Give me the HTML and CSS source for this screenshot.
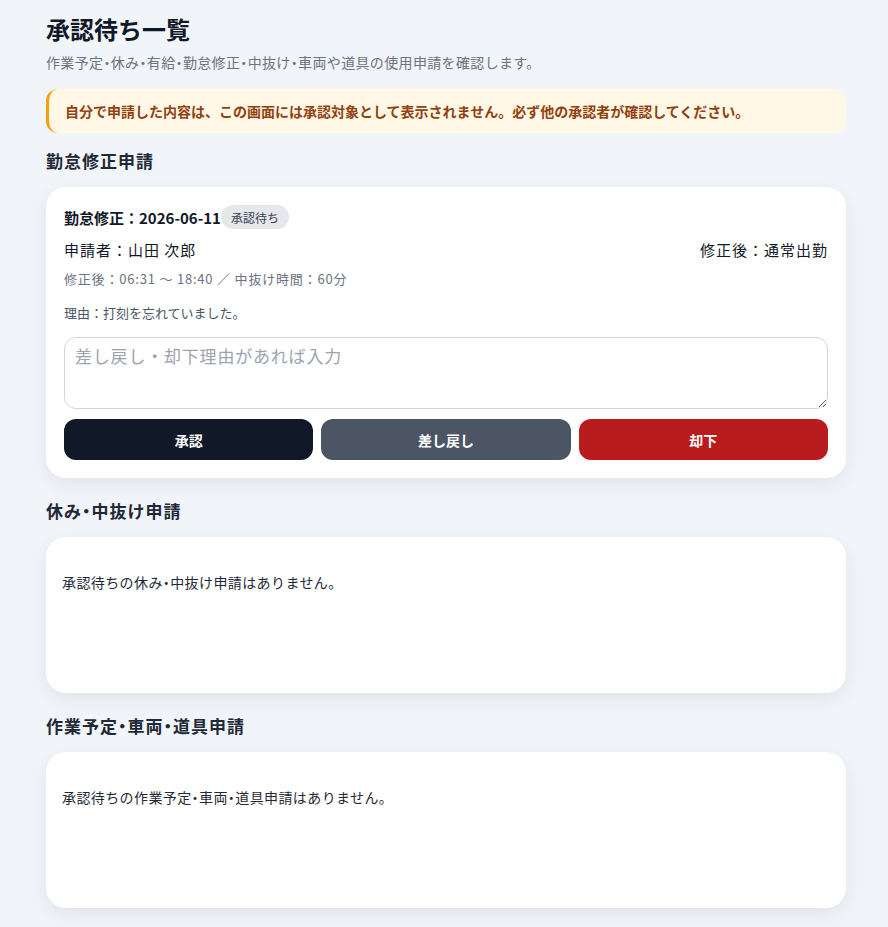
FILE: index.html
```html
<!DOCTYPE html>
<html lang="ja">
<head>
<meta charset="utf-8">
<title>承認待ち一覧</title>
<link rel="stylesheet" href="styles.css">
</head>
<body>
<main class="page">
  <h1 class="title">承認待ち一覧</h1>
  <p class="subtitle">作業予定<span class="dot">・</span>休み<span class="dot">・</span>有給<span class="dot">・</span>勤怠修正<span class="dot">・</span>中抜け<span class="dot">・</span>車両や道具の使用申請を確認します。</p>
  <div class="notice">自分で申請した内容は、この画面には承認対象として表示されません。必ず他の承認者が確認してください。</div>

  <h2 class="section-title">勤怠修正申請</h2>
  <section class="card">
    <div class="card-head">
      <span class="card-title">勤怠修正：2026-06-11</span>
      <span class="badge">承認待ち</span>
    </div>
    <div class="row">
      <span>申請者：山田 次郎</span>
      <span>修正後：通常出勤</span>
    </div>
    <p class="meta">修正後：06:31 〜 18:40 ／ 中抜け時間：60分</p>
    <p class="reason">理由：打刻を忘れていました。</p>
    <textarea class="comment" placeholder="差し戻し・却下理由があれば入力"></textarea>
    <div class="actions">
      <button class="btn btn-approve">承認</button>
      <button class="btn btn-return">差し戻し</button>
      <button class="btn btn-reject">却下</button>
    </div>
  </section>

  <h2 class="section-title">休み<span class="dot">・</span>中抜け申請</h2>
  <section class="card card-empty">
    <p class="empty">承認待ちの休み<span class="dot">・</span>中抜け申請はありません。</p>
  </section>

  <h2 class="section-title">作業予定<span class="dot">・</span>車両<span class="dot">・</span>道具申請</h2>
  <section class="card card-empty">
    <p class="empty">承認待ちの作業予定<span class="dot">・</span>車両<span class="dot">・</span>道具申請はありません。</p>
  </section>
</main>
</body>
</html>
```

FILE: styles.css
```css
* { box-sizing: border-box; }
html, body {
  margin: 0;
  padding: 0;
  background: #f1f4f8;
}
body {
  font-family: "Noto Sans CJK JP", "Noto Sans", "Liberation Sans", sans-serif;
  color: #111827;
}
.page {
  width: 800px;
  margin-left: 46px;
  padding: 13px 0 19px;
}
.dot {
  font-feature-settings: "halt";
}
.title {
  margin: 0;
  font-size: 24px;
  line-height: 32px;
  font-weight: 700;
  color: #111827;
}
.subtitle {
  margin: 7px 0 0;
  font-size: 14px;
  line-height: 20px;
  letter-spacing: 0.35px;
  color: #6b7280;
}
.notice {
  margin-top: 17px;
  padding: 12px 18px 12px 16px;
  background: #fff8e6;
  border-left: 3px solid #f59e0b;
  border-radius: 12px;
  font-size: 14px;
  line-height: 20px;
  font-weight: 700;
  color: #92400e;
}
.section-title {
  margin: 16px 0 14px;
  font-size: 17px;
  line-height: 24px;
  letter-spacing: 1px;
  font-weight: 700;
  color: #1f2937;
}
.card + .section-title { margin-top: 21px; }
.card {
  background: #ffffff;
  border-radius: 20px;
  padding: 18px;
  box-shadow: 0 6px 20px rgba(15, 23, 42, 0.07);
}
.card-head {
  display: flex;
  align-items: center;
  height: 24px;
}
.card-title {
  font-size: 15px;
  font-weight: 700;
  color: #111827;
}
.badge {
  display: inline-flex;
  align-items: center;
  height: 24px;
  padding: 0 10px;
  border-radius: 999px;
  background: #e5e7eb;
  font-size: 12px;
  color: #374151;
}
.row {
  margin-top: 10px;
  display: flex;
  justify-content: space-between;
  font-size: 15px;
  line-height: 22px;
  letter-spacing: 1px;
  color: #111827;
}
.meta {
  margin: 8px 0 0;
  font-size: 13px;
  line-height: 20px;
  letter-spacing: 0.8px;
  color: #6b7280;
}
.reason {
  margin: 14px 0 0;
  font-size: 13px;
  line-height: 20px;
  color: #4b5563;
}
.comment {
  display: block;
  width: 100%;
  height: 72px;
  margin-top: 14px;
  padding: 6px 10px;
  border: 1px solid #d1d5db;
  border-radius: 12px;
  font-family: inherit;
  font-size: 17px;
  line-height: 24px;
  letter-spacing: 0.8px;
  color: #111827;
  resize: vertical;
}
.comment::placeholder { color: #9ca3af; }
.actions {
  margin-top: 10px;
  display: grid;
  grid-template-columns: repeat(3, 1fr);
  gap: 8px;
}
.btn {
  height: 41px;
  border: 0;
  border-radius: 12px;
  font-family: inherit;
  font-size: 14px;
  font-weight: 700;
  color: #ffffff;
}
.btn-approve { background: #111827; }
.btn-return { background: #4b5563; }
.btn-reject { background: #b91c1c; }
.card-empty {
  min-height: 156px;
  padding: 34px 16px;
}
.empty {
  margin: 0;
  font-size: 14px;
  line-height: 22px;
  letter-spacing: 0.4px;
  color: #1f2937;
}
```
